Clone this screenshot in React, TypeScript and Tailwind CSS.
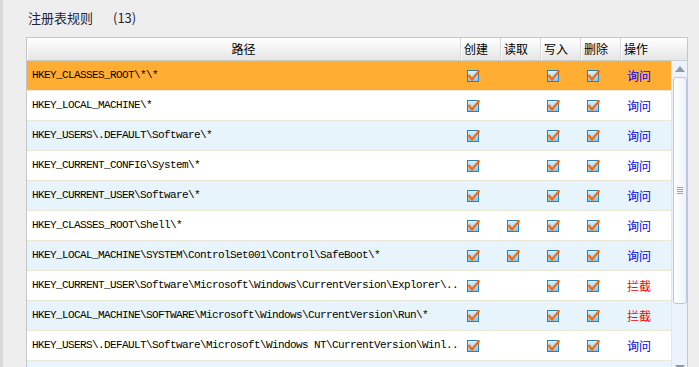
import React from "react";

type Rule = { path: string; create: boolean; read: boolean; write: boolean; del: boolean; action: "询问" | "拦截" };

const rules: Rule[] = [
  { path: "HKEY_CLASSES_ROOT\\*\\*", create: true, read: false, write: true, del: true, action: "询问" },
  { path: "HKEY_LOCAL_MACHINE\\*", create: true, read: false, write: true, del: true, action: "询问" },
  { path: "HKEY_USERS\\.DEFAULT\\Software\\*", create: true, read: false, write: true, del: true, action: "询问" },
  { path: "HKEY_CURRENT_CONFIG\\System\\*", create: true, read: false, write: true, del: true, action: "询问" },
  { path: "HKEY_CURRENT_USER\\Software\\*", create: true, read: false, write: true, del: true, action: "询问" },
  { path: "HKEY_CLASSES_ROOT\\Shell\\*", create: true, read: true, write: true, del: true, action: "询问" },
  { path: "HKEY_LOCAL_MACHINE\\SYSTEM\\ControlSet001\\Control\\SafeBoot\\*", create: true, read: true, write: true, del: true, action: "询问" },
  { path: "HKEY_CURRENT_USER\\Software\\Microsoft\\Windows\\CurrentVersion\\Explorer\\..", create: true, read: false, write: true, del: true, action: "拦截" },
  { path: "HKEY_LOCAL_MACHINE\\SOFTWARE\\Microsoft\\Windows\\CurrentVersion\\Run\\*", create: true, read: false, write: true, del: true, action: "拦截" },
  { path: "HKEY_USERS\\.DEFAULT\\Software\\Microsoft\\Windows NT\\CurrentVersion\\Winl..", create: true, read: false, write: true, del: true, action: "询问" },
];

function CheckIcon() {
  return (
    <svg width="13" height="13" viewBox="0 0 13 13">
      <defs>
        <linearGradient id="cbg" x1="0" y1="0" x2="0" y2="1">
          <stop offset="0" stopColor="#e4f4fc" />
          <stop offset="1" stopColor="#7fc3e8" />
        </linearGradient>
      </defs>
      <rect x="0.5" y="1.5" width="11" height="11" fill="url(#cbg)" stroke="#2f7fb8" />
      <path d="M1.5 6 L5 10.5 L12.5 1.5" fill="none" stroke="#ff6600" strokeWidth="2.2" strokeLinejoin="miter" />
    </svg>
  );
}

function HeaderCell({ label, className }: { label: string; className: string }) {
  return (
    <div className={`h-full flex items-center border-r border-[#d5d5d5] shadow-[inset_1px_0_0_#ffffff] ${className}`}>
      {label}
    </div>
  );
}

export default function App() {
  return (
    <div className="w-[699px] h-[367px] overflow-hidden bg-[#eeeeee] flex font-['Noto_Sans_CJK_SC',sans-serif]">
      <div className="w-[3px] h-full bg-[#d9d9d9] shrink-0" />
      <div className="flex-1 flex flex-col">
        <div className="h-[37px] shrink-0 pl-[25px] pt-[9px] flex items-start gap-[20px] text-[13px] leading-[17px] text-[#1e2438]">
          <span>注册表规则</span>
          <span>(13)</span>
        </div>
        <div className="shrink-0 ml-[23px] w-[662px] border border-b-0 border-[#c6c6c6] bg-white flex flex-col">
          <div className="h-[23px] shrink-0 flex text-[12px] text-black bg-gradient-to-b from-[#ffffff] to-[#e6e6e6] border-b border-[#cfcfcf]">
            <HeaderCell label="路径" className="w-[434px] justify-center" />
            <HeaderCell label="创建" className="w-[40px] pl-[3px]" />
            <HeaderCell label="读取" className="w-[40px] pl-[3px]" />
            <HeaderCell label="写入" className="w-[40px] pl-[3px]" />
            <HeaderCell label="删除" className="w-[40px] pl-[3px]" />
            <div className="flex-1 h-full flex items-center pl-[3px] shadow-[inset_1px_0_0_#ffffff]">操作</div>
          </div>
          <div className="flex shrink-0">
            <div className="w-[644px] flex flex-col">
              {rules.map((r, i) => {
                const bg = i === 0 ? "bg-[#ffad33]" : i % 2 === 0 ? "bg-[#e8f4fc]" : "bg-white";
                return (
                  <div key={i} className={`h-[30px] shrink-0 flex items-center border-b border-[#ece6d6] ${bg}`}>
                    <div className="w-[434px] pl-[5px] font-['Liberation_Mono',monospace] text-[11px] tracking-[-0.6px] text-black whitespace-nowrap overflow-hidden">
                      {r.path}
                    </div>
                    <div className="w-[40px] pl-[6px] flex">{r.create && <CheckIcon />}</div>
                    <div className="w-[40px] pl-[6px] flex">{r.read && <CheckIcon />}</div>
                    <div className="w-[40px] pl-[6px] flex">{r.write && <CheckIcon />}</div>
                    <div className="w-[40px] pl-[6px] flex">{r.del && <CheckIcon />}</div>
                    <div className={`flex-1 pl-[6px] text-[12px] ${r.action === "拦截" ? "text-[#ff0000]" : "text-[#0000ff]"}`}>
                      {r.action}
                    </div>
                  </div>
                );
              })}
              <div className="h-[30px] shrink-0 bg-[#e8f4fc]" />
            </div>
            <div className="w-[16px] bg-[#edf3fc] border-l border-[#dfe7f3] flex flex-col items-center">
              <svg width="10" height="6" viewBox="0 0 10 6" className="mt-[5px] shrink-0">
                <path d="M0 6 L5 0 L10 6 Z" fill="#8f9aa8" />
              </svg>
              <div className="mt-[5px] shrink-0 w-[14px] h-[227px] rounded-[3px] border border-[#b9c8dc] bg-gradient-to-r from-[#ffffff] to-[#edf3fb] flex flex-col items-center justify-center gap-[1px]">
                <div className="w-[6px] h-[1px] bg-[#8aa6cf]" />
                <div className="w-[6px] h-[1px] bg-[#8aa6cf]" />
                <div className="w-[6px] h-[1px] bg-[#8aa6cf]" />
                <div className="w-[6px] h-[1px] bg-[#8aa6cf]" />
              </div>
              <svg width="10" height="6" viewBox="0 0 10 6" className="mt-[61px] shrink-0">
                <path d="M0 0 L10 0 L5 6 Z" fill="#8f9aa8" />
              </svg>
            </div>
          </div>
        </div>
      </div>
    </div>
  );
}
